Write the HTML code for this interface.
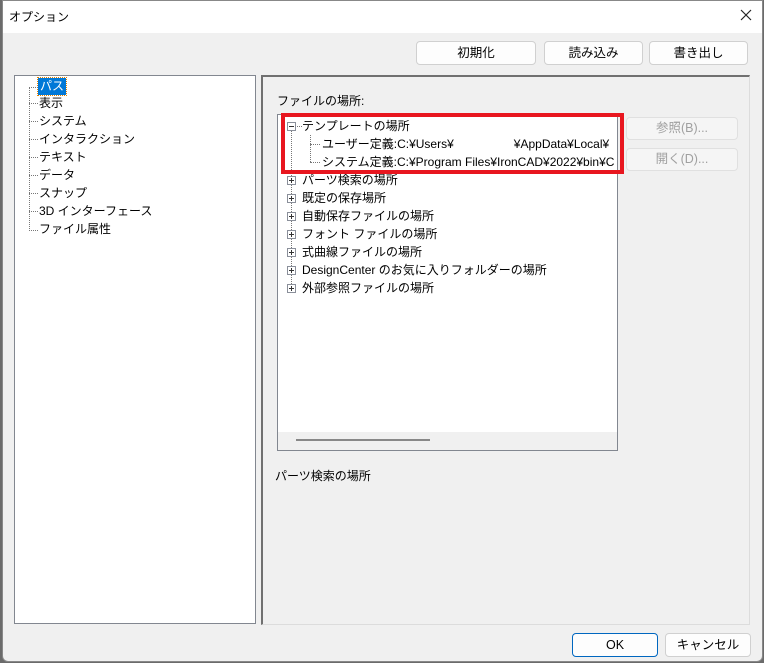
<!DOCTYPE html>
<html><head><meta charset="utf-8"><style>
*{box-sizing:border-box}
body{margin:0;width:764px;height:663px;background:#6b6b6b;position:relative;overflow:hidden;font-family:"Liberation Sans","Noto Sans CJK JP",sans-serif;font-size:12px;color:#000}
.frame{position:absolute;left:2px;top:0;width:761px;height:662px;border:1px solid #888;border-radius:0 0 6px 6px;background:#f0f0f0}
.win{position:absolute;left:0;top:0;width:764px;height:663px}
.title{position:absolute;left:3px;top:1px;width:759px;height:32px;background:#fff}
.abs{position:absolute;white-space:nowrap}
.btn{position:absolute;background:#fdfdfd;border:1px solid #d0d0d0;border-radius:4px;text-align:center;font-size:12.5px}
.row{position:absolute;height:18px;line-height:18px;white-space:nowrap}
.pl{position:absolute;width:9px;height:9px;border:1px solid #8a8f9a;background:#fff}
.pl:before{content:"";position:absolute;left:1px;top:3px;width:5px;height:1px;background:#333}
.pl.p:after{content:"";position:absolute;left:3px;top:1px;width:1px;height:5px;background:#333}
.dh{position:absolute;border-top:1px dotted #777;height:0}
.dv{position:absolute;border-left:1px dotted #777;width:0}
</style></head><body>
<div class="frame"></div>
<div class="win">
<div class="title"></div>
<div class="abs" style="left:9px;top:8px;font-size:12px">オプション</div>
<svg class="abs" style="left:740px;top:9px" width="12" height="12" viewBox="0 0 12 12"><path d="M1 1L11 11M11 1L1 11" stroke="#222" stroke-width="1.2"/></svg>
<div class="btn" style="left:416px;top:41px;width:120px;height:24px;line-height:22px">初期化</div>
<div class="btn" style="left:544px;top:41px;width:99px;height:24px;line-height:22px">読み込み</div>
<div class="btn" style="left:649px;top:41px;width:99px;height:24px;line-height:22px">書き出し</div>
<!-- left tree -->
<div class="abs" style="left:14px;top:75px;width:242px;height:549px;background:#fff;border:1px solid #828790"></div>
<div class="dv" style="left:29px;top:87px;height:144px"></div>
<div class="abs" style="left:38px;top:78px;background:#0078d7;color:#fff;padding:0 2px;height:17px;line-height:17px;outline:1px dotted #e08000">パス</div>
<div class="dh" style="left:29px;top:87px;width:9px"></div>
<div class="row" style="left:39px;top:94px">表示</div><div class="dh" style="left:29px;top:103px;width:9px"></div>
<div class="row" style="left:39px;top:112px">システム</div><div class="dh" style="left:29px;top:121px;width:9px"></div>
<div class="row" style="left:39px;top:130px">インタラクション</div><div class="dh" style="left:29px;top:139px;width:9px"></div>
<div class="row" style="left:39px;top:148px">テキスト</div><div class="dh" style="left:29px;top:157px;width:9px"></div>
<div class="row" style="left:39px;top:166px">データ</div><div class="dh" style="left:29px;top:175px;width:9px"></div>
<div class="row" style="left:39px;top:184px">スナップ</div><div class="dh" style="left:29px;top:193px;width:9px"></div>
<div class="row" style="left:39px;top:202px">3D インターフェース</div><div class="dh" style="left:29px;top:211px;width:9px"></div>
<div class="row" style="left:39px;top:220px">ファイル属性</div><div class="dh" style="left:29px;top:230px;width:9px"></div>
<!-- right panel -->
<div class="abs" style="left:261px;top:75px;width:489px;height:550px;border:1px solid #dcdcdc;border-top:2px solid #707070;border-left:2px solid #707070"></div>
<div class="abs" style="left:277px;top:92px">ファイルの場所:</div>
<div class="abs" style="left:277px;top:114px;width:341px;height:337px;background:#fff;border:1px solid #828790"></div>
<div class="abs" style="left:278px;top:432px;width:339px;height:18px;background:#f0f0f0"></div>
<div class="abs" style="left:296px;top:439px;width:134px;height:2px;background:#888"></div>
<div class="dv" style="left:291px;top:130px;height:162px"></div>
<div class="dv" style="left:310px;top:135px;height:27px"></div>
<div class="pl" style="left:287px;top:122px"></div><div class="dh" style="left:297px;top:126px;width:5px"></div>
<div class="row" style="left:302px;top:117px">テンプレートの場所</div>
<div class="dh" style="left:310px;top:144px;width:10px"></div><div class="row" style="left:322px;top:135px">ユーザー定義:C:¥Users¥&nbsp;&nbsp;&nbsp;&nbsp;&nbsp;&nbsp;&nbsp;&nbsp;&nbsp;&nbsp;&nbsp;&nbsp;&nbsp;&nbsp;&nbsp;&nbsp;&nbsp;&nbsp;¥AppData¥Local¥</div>
<div class="dh" style="left:310px;top:162px;width:10px"></div><div class="row" style="left:322px;top:153px;width:295px;overflow:hidden">システム定義:C:¥Program Files¥IronCAD¥2022¥bin¥C</div>
<div class="pl p" style="left:287px;top:176px"></div><div class="row" style="left:302px;top:171px">パーツ検索の場所</div>
<div class="pl p" style="left:287px;top:194px"></div><div class="row" style="left:302px;top:189px">既定の保存場所</div>
<div class="pl p" style="left:287px;top:212px"></div><div class="row" style="left:302px;top:207px">自動保存ファイルの場所</div>
<div class="pl p" style="left:287px;top:230px"></div><div class="row" style="left:302px;top:225px">フォント ファイルの場所</div>
<div class="pl p" style="left:287px;top:248px"></div><div class="row" style="left:302px;top:243px">式曲線ファイルの場所</div>
<div class="pl p" style="left:287px;top:266px"></div><div class="row" style="left:302px;top:261px">DesignCenter のお気に入りフォルダーの場所</div>
<div class="pl p" style="left:287px;top:284px"></div><div class="row" style="left:302px;top:279px">外部参照ファイルの場所</div>
<div class="abs" style="left:281px;top:113px;width:343px;height:61px;border:4px solid #e8161f"></div>
<div class="btn" style="left:626px;top:117px;width:112px;height:23px;line-height:21px;color:#a0a0a0;background:#f5f5f5;border-color:#e0e0e0">参照(B)...</div>
<div class="btn" style="left:626px;top:148px;width:112px;height:23px;line-height:21px;color:#a0a0a0;background:#f5f5f5;border-color:#e0e0e0">開く(D)...</div>
<div class="abs" style="left:275px;top:467px">パーツ検索の場所</div>
<div class="btn" style="left:572px;top:633px;width:86px;height:24px;line-height:22px;border-color:#0067c0">OK</div>
<div class="btn" style="left:665px;top:633px;width:86px;height:24px;line-height:22px">キャンセル</div>
</div>
</body></html>
